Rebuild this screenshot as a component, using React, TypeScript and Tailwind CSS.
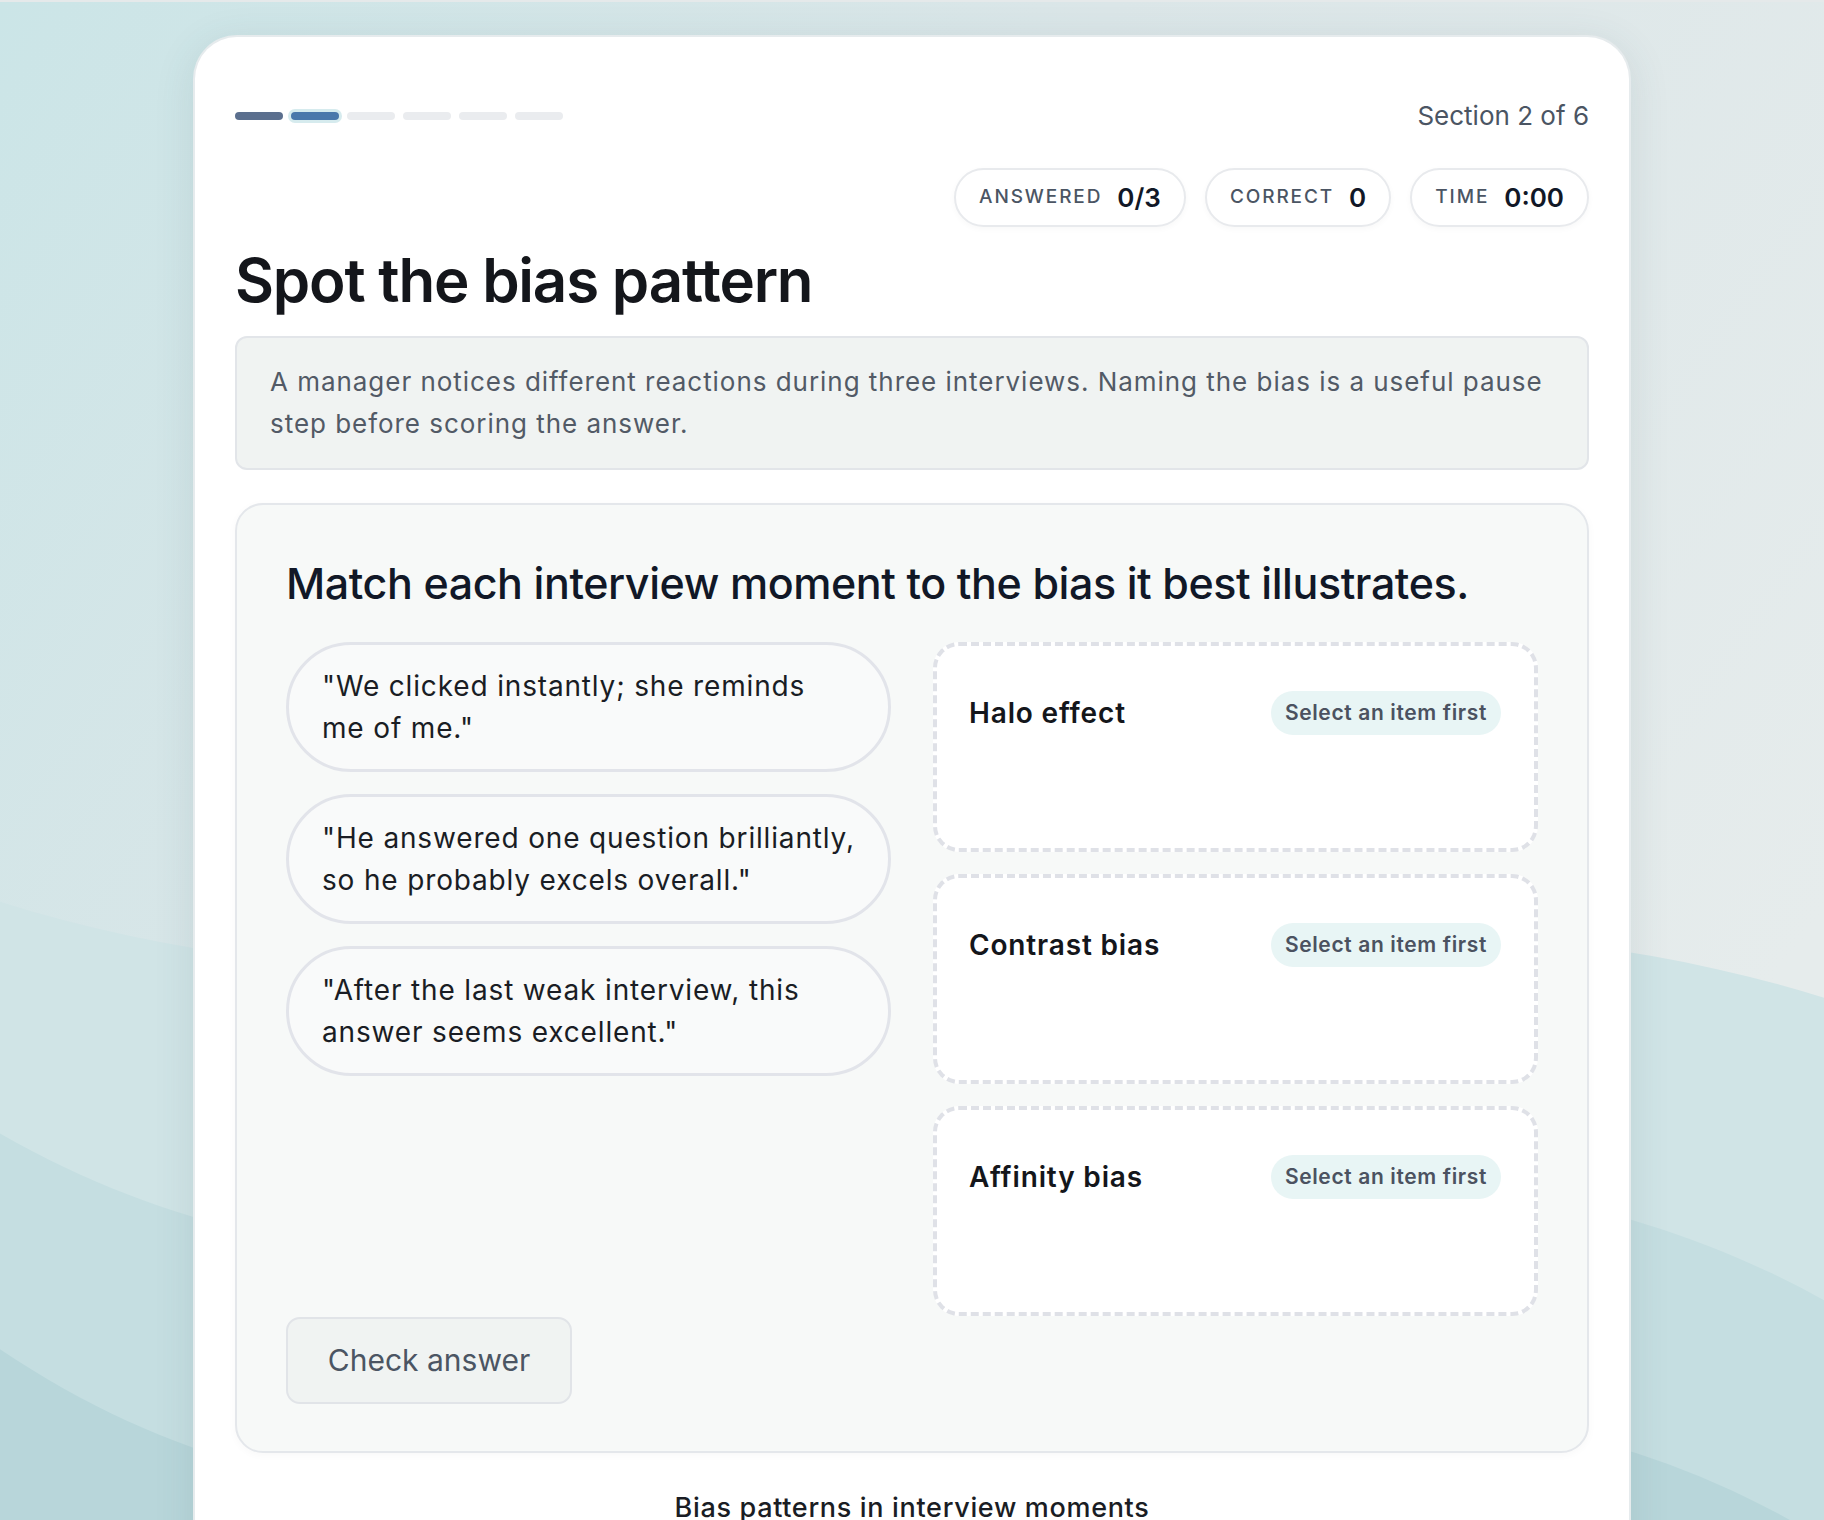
import React from "react";

const items = [
  ['"We clicked instantly; she reminds', "me of me.\""],
  ['"He answered one question brilliantly,', 'so he probably excels overall."'],
  ['"After the last weak interview, this', 'answer seems excellent."'],
];

const zones = ["Halo effect", "Contrast bias", "Affinity bias"];

const stats = [
  { label: "Answered", value: "0/3" },
  { label: "Correct", value: "0" },
  { label: "Time", value: "0:00" },
];

function Background() {
  return (
    <svg
      className="absolute inset-0 h-full w-full"
      viewBox="0 0 1824 1520"
      preserveAspectRatio="none"
      aria-hidden="true"
    >
      <defs>
        <linearGradient id="bgg" x1="0" y1="0" x2="1" y2="0.6">
          <stop offset="0" stopColor="#cbe5e7" />
          <stop offset="0.45" stopColor="#dbe6e8" />
          <stop offset="1" stopColor="#e6ecec" />
        </linearGradient>
      </defs>
      <rect x="0" y="0" width="1824" height="1520" fill="url(#bgg)" />
      <path d="M0,901 C608,1094 1216,808 1824,997 L1824,1520 L0,1520 Z" fill="#d0e4e6" />
      <path d="M0,1133 C608,1481 1216,962 1824,1300 L1824,1520 L0,1520 Z" fill="#c5dee1" />
      <path d="M0,1349 C608,1758 1216,1166 1824,1540 L1824,1520 L0,1520 Z" fill="#b8d6da" />
    </svg>
  );
}

export default function App() {
  const font = { fontFamily: "Inter, 'Noto Sans', sans-serif" };
  return (
    <div
      className="relative h-[1520px] w-full overflow-hidden border-t-2 border-[#e5e9ea]"
      style={font}
    >
      <Background />
      <div className="relative z-10 pt-[33px]">
        <div className="mx-auto w-[1438px] rounded-t-[44px] border-2 border-b-0 border-[#e6ebed] bg-white px-[40px] pt-[61px] pb-[80px] shadow-[0_8px_40px_rgba(60,90,100,0.12)]">
          {/* header row */}
          <div className="flex h-[36px] items-center justify-between">
            <div className="flex items-center gap-[8px]">
              <span className="h-[8px] w-[48px] rounded-full bg-[#5b6f8e]" />
              <span className="h-[8px] w-[48px] rounded-full bg-[#4a78ab] ring-[3px] ring-[#d6ebee]" />
              <span className="h-[8px] w-[48px] rounded-full bg-[#eaecef]" />
              <span className="h-[8px] w-[48px] rounded-full bg-[#eaecef]" />
              <span className="h-[8px] w-[48px] rounded-full bg-[#eaecef]" />
              <span className="h-[8px] w-[48px] rounded-full bg-[#eaecef]" />
            </div>
            <div className="text-[26px] leading-[36px] text-[#4b5563]">Section 2 of 6</div>
          </div>

          {/* stats */}
          <div className="mt-[34px] flex justify-end gap-[19px]">
            {stats.map((s) => (
              <div
                key={s.label}
                className="flex h-[59px] items-center gap-[15px] rounded-full border-2 border-[#e8eaed] bg-white px-[23px] shadow-[0_2px_6px_rgba(0,0,0,0.03)]"
              >
                <span className="text-[19px] font-medium uppercase tracking-[0.1em] text-[#4b5563]">
                  {s.label}
                </span>
                <span className="text-[26px] font-semibold text-[#111827]">{s.value}</span>
              </div>
            ))}
          </div>

          {/* title */}
          <h1 className="mt-[20px] text-[60px] font-semibold leading-[66px] tracking-[-0.02em] text-[#14161b]">
            Spot the bias pattern
          </h1>

          {/* description */}
          <div className="mt-[23px] rounded-[12px] border-2 border-[#e2e5e9] bg-[#f0f3f2] px-[33px] py-[23px]">
            <p className="text-[26px] leading-[42px] tracking-[0.037em] text-[#525a66]">
              A manager notices different reactions during three interviews. Naming the bias is a useful pause step before scoring the answer.
            </p>
          </div>

          {/* activity */}
          <div className="mt-[33px] rounded-[28px] border-2 border-[#e4e7eb] bg-[#f7f9f8] px-[49px] pt-[52px] pb-[47px] shadow-[0_2px_8px_rgba(0,0,0,0.03)]">
            <h2 className="text-[43px] font-medium leading-[52px] tracking-[-0.01em] text-[#111827]">
              Match each interview moment to the bias it best illustrates.
            </h2>
            <div className="mt-[33px] grid grid-cols-2 gap-x-[42px]">
              <div className="flex flex-col gap-[22px]">
                {items.map((t) => (
                  <div
                    key={t[0]}
                    className="flex h-[130px] items-center rounded-full border-[3px] border-[#e2e4ea] bg-[#f9fafa] pl-[33px] pr-[12px]"
                  >
                    <p className="text-[28px] leading-[42px] tracking-[0.03em] text-[#1a1d24]">
                      {t[0]}
                      <br />
                      {t[1]}
                    </p>
                  </div>
                ))}
              </div>
              <div className="flex flex-col gap-[22px]">
                {zones.map((z) => (
                  <div
                    key={z}
                    className="h-[210px] rounded-[26px] border-4 border-dashed border-[#dfe1e7] bg-white pl-[32px] pr-[33px] pt-[45px]"
                  >
                    <div className="flex items-center justify-between">
                      <span className="text-[28px] font-semibold tracking-[0.03em] text-[#14161b]">{z}</span>
                      <span className="flex h-[44px] items-center rounded-full bg-[#e8f5f5] px-[14px] text-[21px] font-semibold tracking-[0.03em] text-[#4b5260]">
                        Select an item first
                      </span>
                    </div>
                  </div>
                ))}
              </div>
            </div>
            <button className="mt-[1px] flex h-[87px] w-[286px] items-center justify-center rounded-[14px] border-2 border-[#e1e4e8] bg-[#f0f3f2] text-[30px] text-[#4b5563]">
              Check answer
            </button>
          </div>

          <div className="mt-[37px] text-center text-[27px] font-medium leading-[36px] tracking-[0.025em] text-[#1a1d24]">
            Bias patterns in interview moments
          </div>
          <div className="h-[200px]" />
        </div>
      </div>
    </div>
  );
}
